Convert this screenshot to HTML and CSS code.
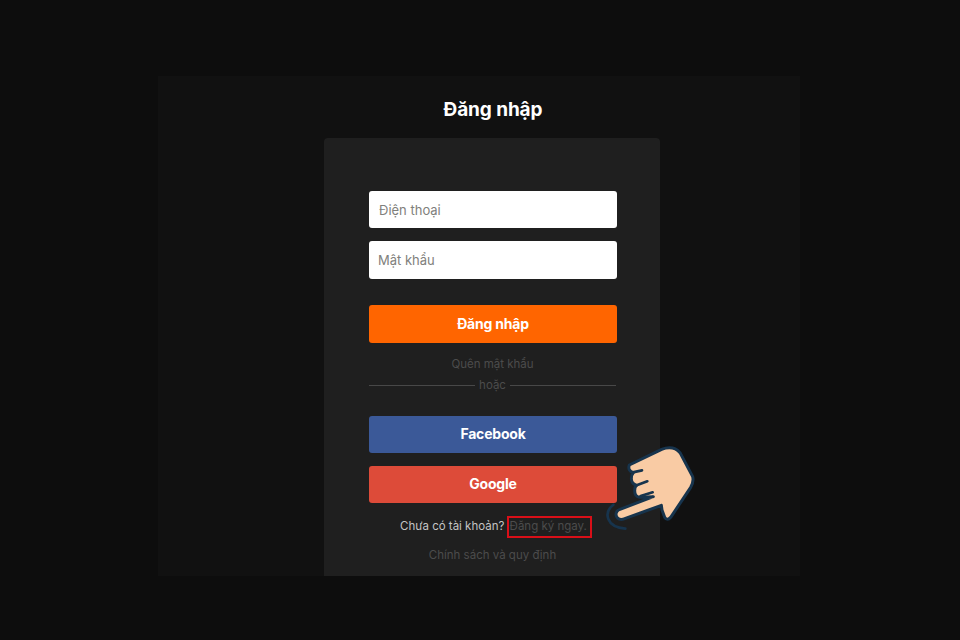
FILE: index.html
```html
<!DOCTYPE html>
<html lang="vi">
<head>
<meta charset="utf-8">
<title>Đăng nhập</title>
<link rel="stylesheet" href="styles.css">
</head>
<body>
<main class="panel">
  <h1 class="title">Đăng nhập</h1>
  <form class="card">
    <input class="field" type="text" placeholder="Điện thoại">
    <input class="field field-second" type="password" placeholder="Mật khẩu">
    <button class="btn btn-orange" type="button">Đăng nhập</button>
    <a class="muted forgot">Quên mật khẩu</a>
    <div class="divider"><span class="muted">hoặc</span></div>
    <button class="btn btn-facebook" type="button">Facebook</button>
    <button class="btn btn-google" type="button">Google</button>
    <p class="signup">Chưa có tài khoản? <a class="signup-link">Đăng ký ngay.</a></p>
    <a class="muted policy">Chính sách và quy định</a>
    <svg class="hand" viewBox="0 0 360 330" aria-hidden="true">
      <path class="hand-arc" d="M70 224C40 248 48 290 106 296"/>
      <path class="hand-skin" d="M118 105L215 58Q250 45 270 68L308 140Q312 155 302 172L242 262Q232 274 224 262L216 240L214 226L98 268Q80 270 78 254Q78 242 90 238L190 200L150 202Q134 200 134 182Q134 170 140 166Q124 160 124 146Q124 134 130 128Q112 122 118 105Z"/>
      <path class="hand-line" d="M128 127L156 121M140 166L172 154M152 198L188 187"/>
    </svg>
  </form>
</main>
</body>
</html>
```

FILE: styles.css
```css
* {
  box-sizing: border-box;
}

html,
body {
  margin: 0;
  height: 640px;
  overflow: hidden;
  background: #0d0d0d;
}

body {
  font-family: Inter, "Noto Sans", sans-serif;
}

.panel {
  display: flex;
  flex-direction: column;
  align-items: center;
  width: 642px;
  height: 500px;
  margin: 76px 0 0 158px;
  padding-left: 26px;
  overflow: hidden;
  background: #111111;
}

.title {
  margin: 21px 0 0 2px;
  font-size: 19px;
  line-height: 26px;
  font-weight: 700;
  letter-spacing: -0.1px;
  color: #ffffff;
}

.card {
  position: relative;
  display: flex;
  flex-direction: column;
  flex: 1;
  width: 336px;
  margin-top: 15px;
  padding: 53px 44px 0 45px;
  border-radius: 4px 4px 0 0;
  background: #1f1f1f;
}

.field {
  width: 248px;
  height: 37px;
  padding: 0 10px;
  border: 0;
  border-radius: 3px;
  background: #ffffff;
  font: 13px Inter, "Noto Sans", sans-serif;
}

.field::placeholder {
  color: #80807c;
  opacity: 1;
}

.field-second {
  height: 38px;
  margin-top: 13px;
  padding: 0 9px 1px;
}

.btn {
  display: block;
  width: 248px;
  padding-bottom: 3px;
  border: 0;
  border-radius: 3px;
  color: #ffffff;
  font: 700 14px Inter, "Noto Sans", sans-serif;
  letter-spacing: -0.2px;
}

.btn-orange {
  height: 38px;
  margin-top: 26px;
  background: #ff6500;
}

.btn-facebook {
  height: 37px;
  margin-top: 23px;
  background: #3b5998;
}

.btn-google {
  height: 37px;
  margin-top: 13px;
  background: #dd4b39;
}

.muted {
  color: #4c4c4c;
  font-size: 11.5px;
  line-height: 16px;
  text-align: center;
}

.forgot {
  margin-top: 13px;
}

.divider {
  display: flex;
  align-items: center;
  gap: 4px;
  height: 16px;
  margin-top: 5px;
}

.divider::before,
.divider::after {
  content: "";
  flex: 1;
  height: 1px;
  background: #484848;
}

.signup {
  margin: 12px 0 0;
  padding-left: 7px;
  color: #c4c4c4;
  font-size: 11.5px;
  line-height: 22px;
  text-align: center;
  white-space: nowrap;
}

.signup-link {
  display: inline-block;
  height: 22px;
  padding: 0 3px 0 1px;
  margin-left: -1px;
  border: 2.5px solid #d90f18;
  line-height: 17px;
  color: #4c4c4c;
}

.policy {
  margin-top: 9px;
}

.hand {
  position: absolute;
  left: 266px;
  top: 292px;
  width: 120px;
  height: 110px;
}

.hand-skin {
  fill: #f9cba4;
  stroke: #17344d;
  stroke-width: 9;
  stroke-linejoin: round;
}

.hand-line,
.hand-arc {
  fill: none;
  stroke: #17344d;
  stroke-width: 8;
  stroke-linecap: round;
}
```
